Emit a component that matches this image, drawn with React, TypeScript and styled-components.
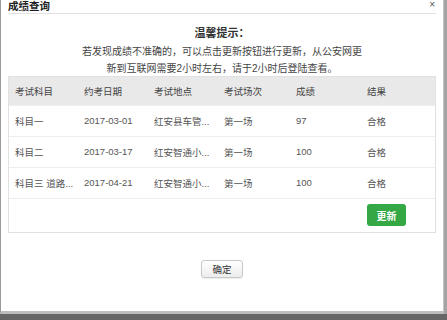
import React, { FunctionComponent } from 'react';
import styled, { createGlobalStyle } from 'styled-components';

const GlobalStyle = createGlobalStyle`
  html, body {
    margin: 0;
    padding: 0;
    background: #666;
  }
  body {
    font-family: "Liberation Sans", "Noto Sans CJK SC", sans-serif;
  }
`;

const Screen = styled.div`
  width: 447px;
  height: 320px;
  display: flex;
  flex-direction: column;
  background: #666;
  overflow: hidden;
`;

const Stage = styled.div`
  display: flex;
  height: 314px;
`;

const Dialog = styled.div`
  width: 432px;
  height: 311px;
  padding: 0 7px 0 7px;
  background: #fff;
  border-left: 1px solid #9a9a9a;
  border-bottom: 3px solid #bdbdbd;
  display: flex;
  flex-direction: column;
  color: #333;
`;

const SideEdge = styled.div`
  flex: 1;
  background: #939393;
  border-left: 1px solid #c4c4c4;
  border-right: 3px solid #a4a4a4;
`;

const TitleBar = styled.div`
  display: flex;
  justify-content: space-between;
  align-items: flex-start;
  height: 13px;
  border-bottom: 1px solid #e2e2e2;
`;

const Title = styled.h3`
  margin: 0;
  font-size: 10.5px;
  font-weight: bold;
  line-height: 12px;
  color: #222;
`;

const Close = styled.span`
  font-size: 10px;
  line-height: 10px;
  color: #555;
  margin-right: 1px;
`;

const Hint = styled.div`
  padding-top: 11px;
  text-align: center;
  font-size: 10px;
  line-height: 17.5px;
  color: #444;
`;

const HintTitle = styled.div`
  font-size: 11px;
  font-weight: bold;
  color: #333;
`;

const Table = styled.div`
  margin-top: -2px;
  border: 1px solid #e1e1e1;
  font-size: 9.5px;
`;

const Row = styled.div<{ $head?: boolean; $height: number }>`
  display: grid;
  grid-template-columns: 69px 70px 70px 72px 71px 1fr;
  align-items: center;
  height: ${(p) => p.$height}px;
  background: ${(p) => (p.$head ? '#e9e9e9' : '#fff')};
  color: ${(p) => (p.$head ? '#444' : '#555')};
  border-bottom: 1px solid #eeeeee;
  &:last-child {
    border-bottom: none;
  }
`;

const Cell = styled.div`
  padding-left: 6px;
  white-space: nowrap;
  overflow: hidden;
`;

const RefreshButton = styled.button`
  margin-left: 6px;
  width: 39px;
  height: 22px;
  border: none;
  border-radius: 3px;
  background: #34a845;
  color: #fff;
  font-family: inherit;
  font-size: 10px;
  font-weight: bold;
  padding: 0;
`;

const Footer = styled.div`
  display: flex;
  justify-content: center;
  padding-top: 27px;
`;

const ConfirmButton = styled.button`
  width: 42px;
  height: 18px;
  padding: 0;
  border: 1px solid #c8c8c8;
  border-radius: 3px;
  background: linear-gradient(#ffffff, #ececec);
  color: #333;
  font-family: inherit;
  font-size: 9.5px;
  box-shadow: 0 1px 1px rgba(0, 0, 0, 0.08);
`;

const headers = ['考试科目', '约考日期', '考试地点', '考试场次', '成绩', '结果'];

const records = [
  ['科目一', '2017-03-01', '红安县车管...', '第一场', '97', '合格'],
  ['科目二', '2017-03-17', '红安智通小...', '第一场', '100', '合格'],
  ['科目三 道路...', '2017-04-21', '红安智通小...', '第一场', '100', '合格'],
];

const App: FunctionComponent = () => (
  <Screen>
    <GlobalStyle />
    <Stage>
      <Dialog>
        <TitleBar>
          <Title>成绩查询</Title>
          <Close>×</Close>
        </TitleBar>
        <Hint>
          <HintTitle>温馨提示：</HintTitle>
          <div>若发现成绩不准确的，可以点击更新按钮进行更新，从公安网更</div>
          <div>新到互联网需要2小时左右，请于2小时后登陆查看。</div>
        </Hint>
        <Table>
          <Row $head $height={28}>
            {headers.map((h) => (
              <Cell key={h}>{h}</Cell>
            ))}
          </Row>
          {records.map((r) => (
            <Row key={r[0]} $height={30}>
              {r.map((c, i) => (
                <Cell key={i}>{c}</Cell>
              ))}
            </Row>
          ))}
          <Row $height={33}>
            <div />
            <div />
            <div />
            <div />
            <div />
            <div>
              <RefreshButton>更新</RefreshButton>
            </div>
          </Row>
        </Table>
        <Footer>
          <ConfirmButton>确定</ConfirmButton>
        </Footer>
      </Dialog>
      <SideEdge />
    </Stage>
  </Screen>
);

export default App;
